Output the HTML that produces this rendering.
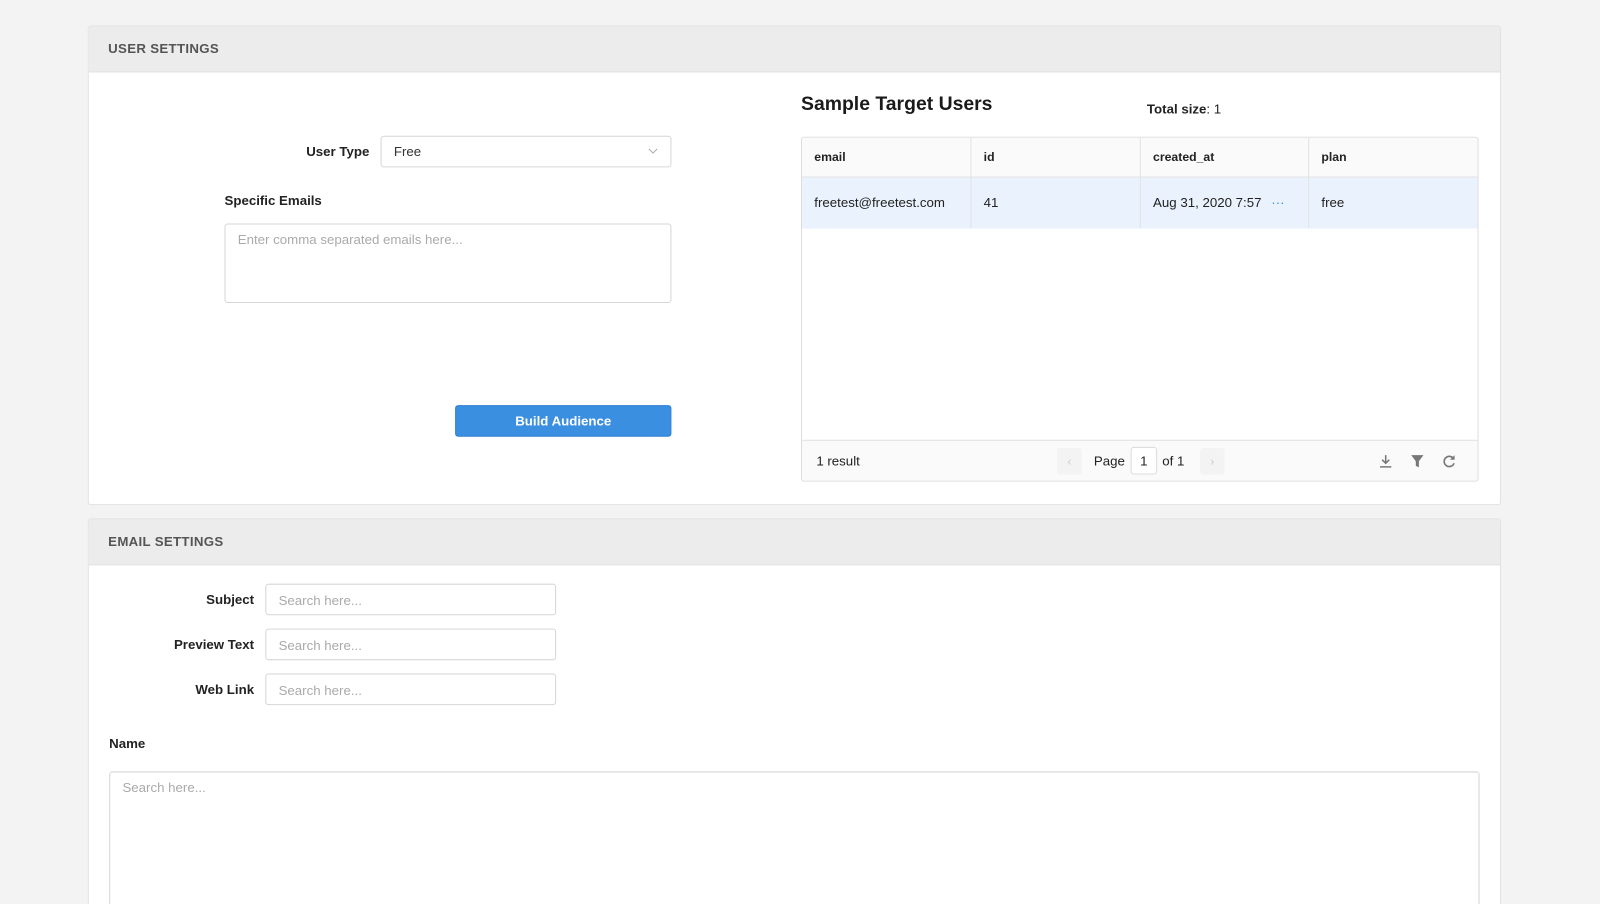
<!DOCTYPE html>
<html><head><style>
html,body{margin:0;padding:0;width:1600px;height:904px;overflow:hidden;background:#f3f3f3;font-family:"Liberation Sans",sans-serif;color:#222}
#clip{position:relative;width:1600px;height:904px;overflow:hidden}
#w{position:absolute;left:0;top:0;width:1568px;height:886px;overflow:hidden;transform:scale(1.0204);transform-origin:0 0}
.a{position:absolute}
.panel{position:absolute;background:#fff;border:1px solid #e2e2e2;border-radius:3px;overflow:hidden}
.ph{position:absolute;left:0;right:0;top:0;height:44px;background:#ececec;border-bottom:1px solid #e2e2e2}
.ph span{position:absolute;left:19px;top:14px;font-size:13px;font-weight:bold;color:#555;letter-spacing:.3px}
.lbl{position:absolute;font-size:13px;font-weight:bold;color:#222;text-align:right}
.inp{position:absolute;border:1px solid #d6d6d6;border-radius:3px;background:#fff;font-size:13px;color:#aaa;box-sizing:border-box;padding:0 0 0 12px}
.th{position:absolute;font-size:12px;font-weight:bold;color:#222}
.td{position:absolute;font-size:13px;color:#222}
</style></head><body><div id="clip"><div id="w">
<div class="panel" style="left:86px;top:25px;width:1383px;height:468px">
 <div class="ph"><span>USER SETTINGS</span></div>
</div>
<div class="lbl" style="left:260px;top:141px;width:102px">User Type</div>
<div class="inp" style="left:373px;top:133px;width:285px;height:31px;line-height:29px;color:#333">Free
 <svg class="a" style="right:12px;top:10px" width="10" height="8" viewBox="0 0 10 8"><path d="M1 2l4 4 4-4" fill="none" stroke="#aaa" stroke-width="1"/></svg></div>
<div class="lbl" style="left:220px;top:189px;text-align:left">Specific Emails</div>
<div class="inp" style="left:220px;top:219px;width:438px;height:78px;padding-top:7px;line-height:16px">Enter comma separated emails here...</div>
<div class="a" style="left:446px;top:397px;width:212px;height:31px;background:#3b8fe0;border:1px solid #2f7fd0;box-sizing:border-box;border-radius:3px;color:#fff;font-size:13px;font-weight:bold;text-align:center;line-height:29px">Build Audience</div>

<div class="a" style="left:785px;top:92px;font-size:19px;font-weight:bold;color:#1a1a1a">Sample Target Users</div>
<div class="a" style="left:1124px;top:99px;font-size:13px"><b>Total size</b>: 1</div>

<div class="a" style="left:785px;top:134px;width:664px;height:338px;border:1px solid #dedede;border-radius:3px;box-sizing:border-box;overflow:hidden;background:#fff">
 <div class="a" style="left:0;top:0;width:663px;height:38px;background:#fafafa;border-bottom:1px solid #e2e2e2"></div>
 <div class="a" style="left:0;top:39px;width:663px;height:50px;background:#eaf3fd"></div>
 <div class="a" style="left:165px;top:0;width:1px;height:89px;background:#e2e2e2"></div>
 <div class="a" style="left:331px;top:0;width:1px;height:89px;background:#e2e2e2"></div>
 <div class="a" style="left:496px;top:0;width:1px;height:89px;background:#e2e2e2"></div>
 <div class="th" style="left:12px;top:12px">email</div>
 <div class="th" style="left:178px;top:12px">id</div>
 <div class="th" style="left:344px;top:12px">created_at</div>
 <div class="th" style="left:509px;top:12px">plan</div>
 <div class="td" style="left:12px;top:56px">freetest@freetest.com</div>
 <div class="td" style="left:178px;top:56px">41</div>
 <div class="td" style="left:344px;top:56px">Aug 31, 2020 7:57 <span style="color:#3b8fe0;margin-left:6px">···</span></div>
 <div class="td" style="left:509px;top:56px">free</div>
 <div class="a" style="left:0;top:296px;width:663px;height:41px;background:#fafafa;border-top:1px solid #e2e2e2"></div>
 <div class="td" style="left:14px;top:309px">1 result</div>
 <div class="a" style="left:250px;top:304px;width:24px;height:26px;background:#f3f3f3;border-radius:3px;color:#ccc;font-size:12px;text-align:center;line-height:26px">‹</div>
 <div class="td" style="left:286px;top:309px">Page</div>
 <div class="a" style="left:322px;top:303px;width:26px;height:27px;border:1px solid #ddd;border-radius:3px;background:#fff;font-size:13px;text-align:center;line-height:26px;box-sizing:border-box">1</div>
 <div class="td" style="left:353px;top:309px">of 1</div>
 <div class="a" style="left:390px;top:304px;width:24px;height:26px;background:#f3f3f3;border-radius:3px;color:#ccc;font-size:12px;text-align:center;line-height:26px">›</div>
 <svg class="a" style="left:565px;top:310px" width="14" height="14" viewBox="0 0 14 14"><path d="M7 1v8M3.5 5.5L7 9l3.5-3.5M1.5 12.5h11" fill="none" stroke="#777" stroke-width="1.5"/></svg>
 <svg class="a" style="left:596px;top:310px" width="14" height="14" viewBox="0 0 14 14"><path d="M1 1h12L8.5 7v6l-3-1.5V7z" fill="#777"/></svg>
 <svg class="a" style="left:627px;top:310px" width="14" height="14" viewBox="0 0 14 14"><path d="M11.5 4.5A5 5 0 1 0 12 9" fill="none" stroke="#777" stroke-width="1.6"/><path d="M12.5 1v4.5H8z" fill="#777"/></svg>
</div>

<div class="panel" style="left:86px;top:508px;width:1383px;height:384px">
 <div class="ph"><span>EMAIL SETTINGS</span></div>
</div>
<div class="lbl" style="left:140px;top:580px;width:109px">Subject</div>
<div class="inp" style="left:260px;top:572px;width:285px;height:31px;line-height:31px">Search here...</div>
<div class="lbl" style="left:140px;top:624px;width:109px">Preview Text</div>
<div class="inp" style="left:260px;top:616px;width:285px;height:31px;line-height:31px">Search here...</div>
<div class="lbl" style="left:140px;top:668px;width:109px">Web Link</div>
<div class="inp" style="left:260px;top:660px;width:285px;height:31px;line-height:31px">Search here...</div>
<div class="lbl" style="left:107px;top:721px;text-align:left">Name</div>
<div class="inp" style="left:107px;top:756px;width:1343px;height:134px;padding-top:7px;line-height:16px">Search here...</div>
</div></div></body></html>
